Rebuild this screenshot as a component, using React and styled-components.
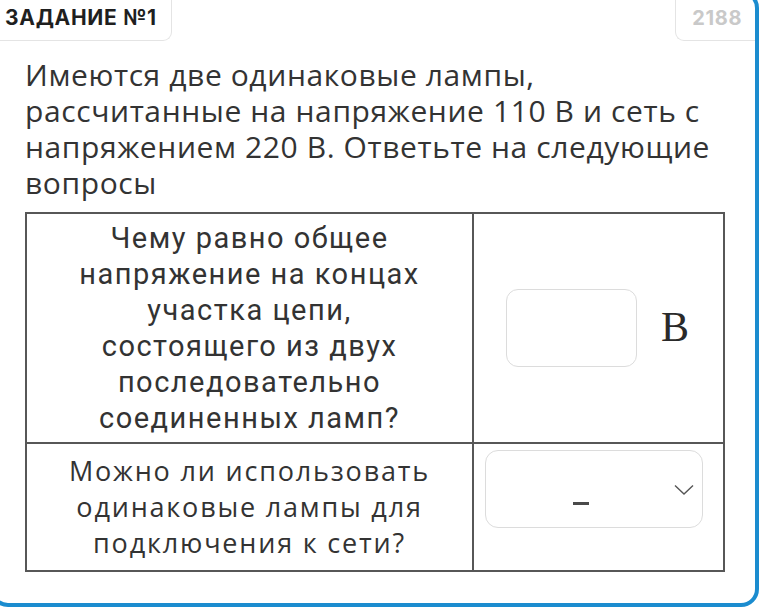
import React from 'react';
import styled, { createGlobalStyle } from 'styled-components';

const Global = createGlobalStyle`
  html, body {
    margin: 0;
    padding: 0;
    background: #ffffff;
    overflow: hidden;
  }
  body {
    font-family: "Open Sans", "Noto Sans", sans-serif;
    color: #333;
  }
`;

const Card = styled.div`
  box-sizing: border-box;
  width: 769px;
  height: 617px;
  margin: -10px 0 0 -10px;
  border: 4px solid #1b8ccf;
  border-radius: 18px;
  background: #fff;
  overflow: hidden;
`;

const Header = styled.div`
  display: flex;
  justify-content: space-between;
  align-items: flex-start;
`;

const Tag = styled.div`
  box-sizing: border-box;
  height: 47px;
  display: flex;
  align-items: flex-end;
  padding: ${(p) => (p.$muted ? '0 13px 12px 16px' : '0 14px 12px 11px')};
  border: 1px solid #e4e4e4;
  border-top: none;
  ${(p) => (p.$muted ? 'border-right: none;' : 'border-left: none;')}
  border-radius: ${(p) => (p.$muted ? '0 0 0 9px' : '0 0 9px 0')};
  font-family: Inter, "Noto Sans", sans-serif;
  font-weight: 700;
  font-size: ${(p) => (p.$muted ? '20px' : '21px')};
  line-height: 1;
  color: ${(p) => (p.$muted ? '#c9c9c9' : '#1f1f1f')};
  letter-spacing: ${(p) => (p.$muted ? '0.6px' : '0.7px')};
`;

const Body = styled.div`
  padding: 16px 0 0 31px;
`;

const Question = styled.p`
  margin: 0;
  width: 705px;
  font-family: "Open Sans", "Noto Sans", sans-serif;
  font-size: 30px;
  line-height: 36px;
  letter-spacing: 0.6px;
  color: #333;
`;

const Table = styled.table`
  margin-top: 11px;
  width: 698px;
  border-collapse: collapse;
  table-layout: fixed;
`;

const Col = styled.col`
  width: ${(p) => p.$w}px;
`;

const Row = styled.tr`
  height: ${(p) => p.$h}px;
`;

const Cell = styled.td`
  border: 2px solid #575757;
  padding: ${(p) => p.$pad || '0'};
  vertical-align: ${(p) => p.$valign || 'middle'};
  text-align: center;
  font-family: ${(p) => (p.$narrow ? 'Roboto, "Noto Sans", sans-serif' : '"Open Sans", "Noto Sans", sans-serif')};
  font-size: ${(p) => (p.$narrow ? '29px' : '27px')};
  letter-spacing: ${(p) => (p.$narrow ? '1.5px' : '1.8px')};
  line-height: 36px;
  color: #333;
`;

const AnswerGroup = styled.div`
  display: flex;
  align-items: center;
  justify-content: center;
  gap: 24px;
`;

const InputBox = styled.div`
  box-sizing: border-box;
  width: 131px;
  height: 78px;
  border: 1px solid #dcdcdc;
  border-radius: 12px;
  background: #fff;
`;

const Unit = styled.span`
  font-family: "Liberation Serif", "DejaVu Serif", serif;
  font-size: 42px;
  line-height: 1;
  color: #2a2a2a;
  margin-top: -3px;
`;

const SelectBox = styled.div`
  position: relative;
  box-sizing: border-box;
  width: 218px;
  height: 78px;
  margin-left: 11px;
  border: 1px solid #dcdcdc;
  border-radius: 13px;
  background: #fff;
`;

const Dash = styled.span`
  position: absolute;
  left: 87px;
  top: 51px;
  width: 16px;
  height: 3px;
  background: #4a4a4a;
`;

const Chevron = styled.svg`
  position: absolute;
  right: 8px;
  top: 33px;
`;

export default function App() {
  return (
    <>
      <Global />
      <Card>
        <Header>
          <Tag>ЗАДАНИЕ №1</Tag>
          <Tag $muted>2188</Tag>
        </Header>
        <Body>
          <Question>
            Имеются две одинаковые лампы, рассчитанные на напряжение 110 В и сеть с
            напряжением 220 В. Ответьте на следующие вопросы
          </Question>
          <Table>
            <colgroup>
              <Col $w={447} />
              <Col $w={251} />
            </colgroup>
            <tbody>
              <Row $h={230}>
                <Cell $narrow $pad="0 38px">
                  Чему равно общее напряжение на концах участка цепи, состоящего из двух
                  последовательно соединенных ламп?
                </Cell>
                <Cell>
                  <AnswerGroup>
                    <InputBox />
                    <Unit>В</Unit>
                  </AnswerGroup>
                </Cell>
              </Row>
              <Row $h={128}>
                <Cell $pad="0 24px">
                  Можно ли использовать одинаковые лампы для подключения к сети?
                </Cell>
                <Cell $valign="top" $pad="6px 0 0 0">
                  <SelectBox>
                    <Dash />
                    <Chevron width="20" height="12" viewBox="0 0 20 12">
                      <path d="M1 1.5 L10 10 L19 1.5" fill="none" stroke="#555" strokeWidth="1.4" />
                    </Chevron>
                  </SelectBox>
                </Cell>
              </Row>
            </tbody>
          </Table>
        </Body>
      </Card>
    </>
  );
}
